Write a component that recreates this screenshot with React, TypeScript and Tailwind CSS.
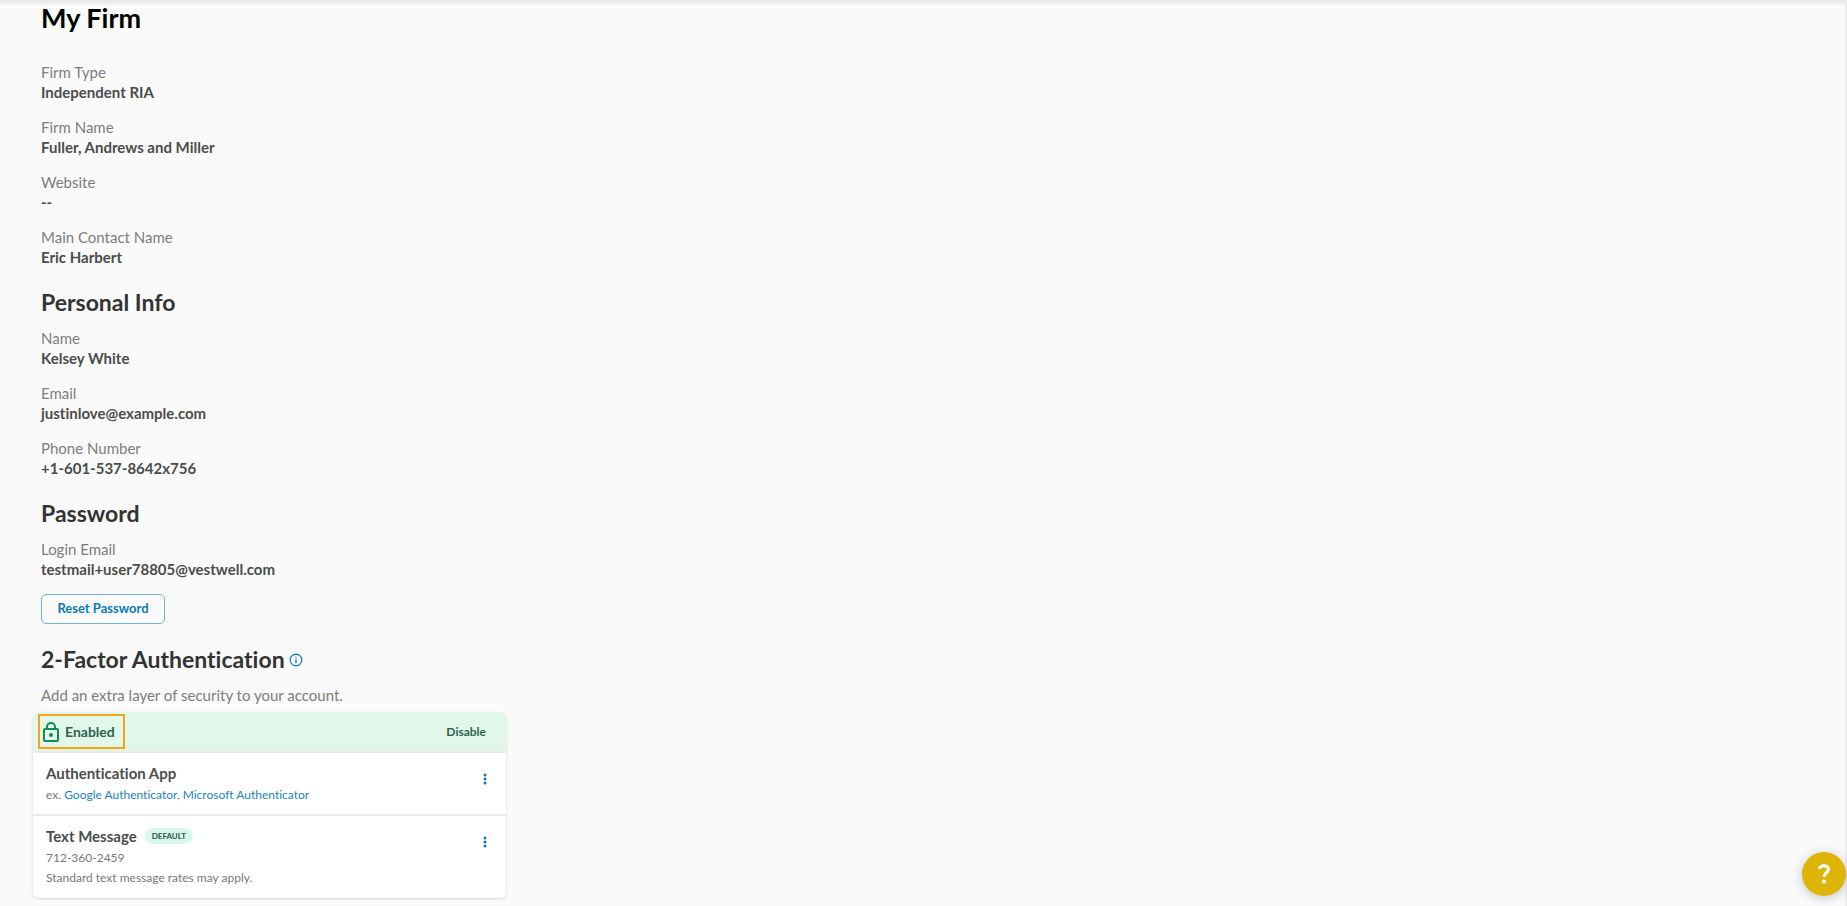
import type { ReactNode } from "react";

type Field = { label: string; value: string };

const firmFields: Field[] = [
  { label: "Firm Type", value: "Independent RIA" },
  { label: "Firm Name", value: "Fuller, Andrews and Miller" },
  { label: "Website", value: "--" },
  { label: "Main Contact Name", value: "Eric Harbert" },
];

const personalFields: Field[] = [
  { label: "Name", value: "Kelsey White" },
  { label: "Email", value: "justinlove@example.com" },
  { label: "Phone Number", value: "+1-601-537-8642x756" },
];

const loginFields: Field[] = [{ label: "Login Email", value: "testmail+user78805@vestwell.com" }];

function FieldList({ fields }: { fields: Field[] }) {
  return (
    <dl className="flex flex-col gap-[15px] text-[15px] leading-5">
      {fields.map((field) => (
        <div key={field.label}>
          <dt className="text-[#7d7d7d]">{field.label}</dt>
          <dd className="font-bold text-[#4c4c4c]">{field.value}</dd>
        </div>
      ))}
    </dl>
  );
}

function SectionTitle({ children }: { children: ReactNode }) {
  return <h2 className="mt-[19px] mb-2.5 text-[23px] leading-8 font-bold text-[#333333]">{children}</h2>;
}

function MenuButton({ label }: { label: string }) {
  return (
    <button type="button" aria-label={label} className="mt-1.5 flex h-6 w-6 items-center justify-center text-[#0b7bb5]">
      <svg width="4" height="12" viewBox="0 0 4 12" fill="currentColor">
        <circle cx="2" cy="2" r="1.5" />
        <circle cx="2" cy="6" r="1.5" />
        <circle cx="2" cy="10" r="1.5" />
      </svg>
    </button>
  );
}

export default function App() {
  return (
    <main className="relative min-h-screen border-r-2 border-[#ececec] bg-[#fafafa] pb-2 font-['Lato','Open_Sans',sans-serif] [font-variant-ligatures:none]">
      <div className="absolute inset-x-0 top-0 h-1.5 bg-linear-to-b from-[#e6e6e6] to-[#fafafa]" />

      <div className="relative px-[41px]">
        <h1 className="mb-[26px] text-[27px] leading-9 font-bold text-black">My Firm</h1>
        <FieldList fields={firmFields} />

        <SectionTitle>Personal Info</SectionTitle>
        <FieldList fields={personalFields} />

        <SectionTitle>Password</SectionTitle>
        <FieldList fields={loginFields} />
        <button
          type="button"
          className="mt-[15px] flex h-[30px] w-31 items-center justify-center rounded-[5px] border border-[#6fb3d5] text-[13px] font-bold text-[#0b7bb5]"
        >
          Reset Password
        </button>

        <SectionTitle>
          <span className="flex items-center gap-1">
            2-Factor Authentication
            <button type="button" aria-label="About 2-factor authentication" className="mt-0.5 text-[#0b7bb5]">
              <svg width="14" height="14" viewBox="0 0 14 14" fill="none" stroke="currentColor">
                <circle cx="7" cy="7" r="5.8" strokeWidth="1.2" />
                <path d="M7 6.2v4" strokeWidth="1.3" />
                <path d="M7 3.7v1.4" strokeWidth="1.3" />
              </svg>
            </button>
          </span>
        </SectionTitle>
        <p className="text-[15px] leading-5 text-[#7d7d7d]">Add an extra layer of security to your account.</p>
      </div>

      <section className="mt-[7px] ml-[33px] max-w-[473px] overflow-hidden rounded-md bg-white shadow-[0_1px_3px_rgba(0,0,0,0.15)]">
        <div className="flex h-[39px] items-center justify-between bg-[#dff8e9] pr-5 pl-[5px]">
          <div className="flex h-[35px] w-[87px] items-center gap-1.5 border-2 border-[#f9a11b] pl-[3px] text-[14px] font-bold text-[#2f624c]">
            <svg width="16" height="20" viewBox="0 0 16 20" fill="none" stroke="#168a5b" strokeWidth="2">
              <rect x="1" y="7" width="14" height="12" rx="1" />
              <path d="M4 7V5a4 4 0 0 1 8 0v2" />
              <circle cx="8" cy="13" r="2" fill="#168a5b" stroke="none" />
            </svg>
            Enabled
          </div>
          <button type="button" className="text-[12px] font-bold text-[#2f624c]">
            Disable
          </button>
        </div>

        <div className="flex items-start justify-between border-t-2 border-[#e9eceb] pt-2 pr-[9px] pb-[9px] pl-[13px]">
          <div>
            <h3 className="text-[15px] leading-6 font-bold text-[#4c4c4c]">Authentication App</h3>
            <p className="text-[12px] leading-5 text-[#777777]">
              ex.{" "}
              <a href="#google" className="text-[#1c83b8]">Google Authenticator</a>,{" "}
              <a href="#microsoft" className="text-[#1c83b8]">Microsoft Authenticator</a>
            </p>
          </div>
          <MenuButton label="Authentication App options" />
        </div>

        <div className="flex items-start justify-between border-t-2 border-[#e9eceb] pt-2 pr-[9px] pb-2.5 pl-[13px]">
          <div>
            <h3 className="flex items-center gap-2 text-[15px] leading-6 font-bold text-[#4c4c4c]">
              Text Message
              <span className="flex h-4 items-center rounded-full bg-[#d9f7ea] px-[7px] text-[8px] font-bold text-[#24594a]">
                DEFAULT
              </span>
            </h3>
            <p className="text-[12px] leading-5 text-[#777777]">712-360-2459</p>
            <p className="text-[12px] leading-5 text-[#777777]">Standard text message rates may apply.</p>
          </div>
          <MenuButton label="Text Message options" />
        </div>
      </section>

      {/* Help launcher floats over the page */}
      <button
        type="button"
        aria-label="Help"
        className="fixed right-px bottom-2.5 flex h-11 w-11 items-center justify-center rounded-full bg-[#deb406] text-white shadow-[0_2px_12px_rgba(0,0,0,0.22)]"
      >
        <svg width="12" height="20" viewBox="0 0 12 20" fill="none" stroke="currentColor" strokeWidth="3">
          <path d="M1.4 5C1.9 2.9 3.7 1.7 6 1.7c2.6 0 4.4 1.5 4.4 3.700 0 3.200-4.200 3.300-4.400 7.600" />
          <circle cx="6" cy="17.6" r="2" fill="currentColor" stroke="none" />
        </svg>
      </button>
    </main>
  );
}
